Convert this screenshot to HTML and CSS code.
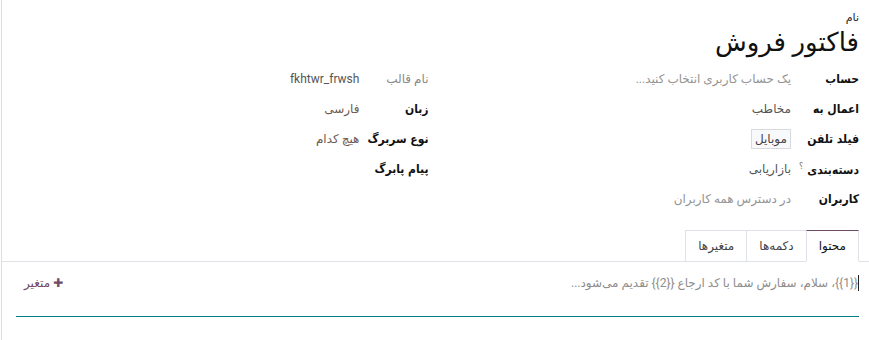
FILE: index.html
```html
<!DOCTYPE html>
<html lang="fa" dir="rtl">

<head>
    <meta charset="UTF-8">
    <title>قالب واتس‌اپ</title>
    <link rel="stylesheet" href="styles.css">
</head>

<body>
    <div class="sheet">

        <div class="title">
            <label class="small-label">نام</label>
            <h1>فاکتور فروش</h1>
        </div>

        <div class="groups">
            <div class="group">
                <div class="lbl">حساب</div>
                <div class="val placeholder">یک حساب کاربری انتخاب کنید...</div>

                <div class="lbl">اعمال به</div>
                <div class="val">مخاطب</div>

                <div class="lbl">فیلد تلفن</div>
                <div class="val"><span class="boxed">موبایل</span></div>

                <div class="lbl">دسته‌بندی<sup class="help">؟</sup></div>
                <div class="val">بازاریابی</div>

                <div class="lbl">کاربران</div>
                <div class="val placeholder">در دسترس همه کاربران</div>
            </div>

            <div class="group">
                <div class="lbl readonly">نام قالب</div>
                <div class="val">fkhtwr_frwsh</div>

                <div class="lbl">زبان</div>
                <div class="val brown">فارسی</div>

                <div class="lbl">نوع سربرگ</div>
                <div class="val brown">هیچ کدام</div>

                <div class="lbl">پیام پابرگ</div>
                <div class="val"></div>
            </div>
        </div>

        <div class="tabs">
            <div class="tab-edge"></div>
            <a class="tab active">محتوا</a>
            <a class="tab">دکمه‌ها</a>
            <a class="tab">متغیرها</a>
            <div class="tab-fill"></div>
        </div>

        <div class="tab-body">
            <div class="editor">
                <span class="caret"></span>
                <span class="hint">{{1}}، سلام، سفارش شما با کد ارجاع {{2}} تقدیم می‌شود...</span>
                <a class="add-var">&#10010; متغیر</a>
            </div>
        </div>
    </div>
</body>

</html>
```

FILE: styles.css
```css
body {
    margin: 0;
    background: white;
    font-family: Roboto, "DejaVu Sans", sans-serif;
    font-size: 12px;
    color: #212529;
}

.sheet {
    height: 340px;
    border-left: 1px solid #dcdde0;
    margin-left: 1px;
}

.title {
    padding: 11px 10px 0 14px;
}

.small-label {
    display: block;
    font-size: 11px;
    line-height: 14px;
}

h1 {
    margin: 0;
    font-size: 26px;
    font-weight: normal;
    line-height: 34px;
    color: #111;
}

.groups {
    display: flex;
    padding: 5px 10px 0 14px;
}

.group {
    flex: 1;
    display: grid;
    grid-template-columns: max-content 1fr;
    grid-auto-rows: 30px;
    align-items: center;
}

.group + .group {
    padding-right: 18px;
}

.lbl {
    font-family: "DejaVu Sans Condensed", "DejaVu Sans", sans-serif;
    font-weight: bold;
    padding-left: 8px;
    color: #111;
}

.lbl.readonly {
    font-family: Roboto, "DejaVu Sans", sans-serif;
    font-weight: normal;
    color: #8a8a8a;
}

.help {
    color: #777;
    font-size: 9px;
    font-weight: normal;
    margin-right: 4px;
}

.val {
    color: #555;
}

.val.placeholder {
    color: #949494;
}

.val.brown {
    color: #6e5a50;
}

.boxed {
    border: 1px solid #d8dadd;
    background: #f8f9fa;
    padding: 2px 3px;
    color: #444;
}

.tabs {
    display: flex;
    margin-top: 16px;
    height: 32px;
}

.tab-edge {
    width: 10px;
    border-bottom: 1px solid #dee2e6;
}

.tab {
    padding: 0 12px;
    line-height: 30px;
    border: 1px solid #dee2e6;
    border-left: none;
    color: #444;
}

.tab.active {
    border-top: 1px solid #714b67;
    border-bottom-color: white;
    color: #111;
    border-left: 1px solid #dee2e6;
}

.tab.active + .tab {
    border-right: none;
}

.tab:last-of-type {
    border-left: 1px solid #dee2e6;
}

.tab-fill {
    flex: 1;
    border-bottom: 1px solid #dee2e6;
}

.tab-body {
    padding: 0 10px 0 14px;
}

.editor {
    display: flex;
    align-items: flex-start;
    height: 55px;
    box-sizing: border-box;
    padding-top: 13px;
    border-bottom: 1px solid #017e84;
}

.caret {
    width: 1px;
    height: 16px;
    background: #222;
}

.hint {
    flex: 1;
    color: #8d8d8d;
    line-height: 16px;
}

.add-var {
    color: #714b67;
    line-height: 16px;
    padding-left: 8px;
}
```
